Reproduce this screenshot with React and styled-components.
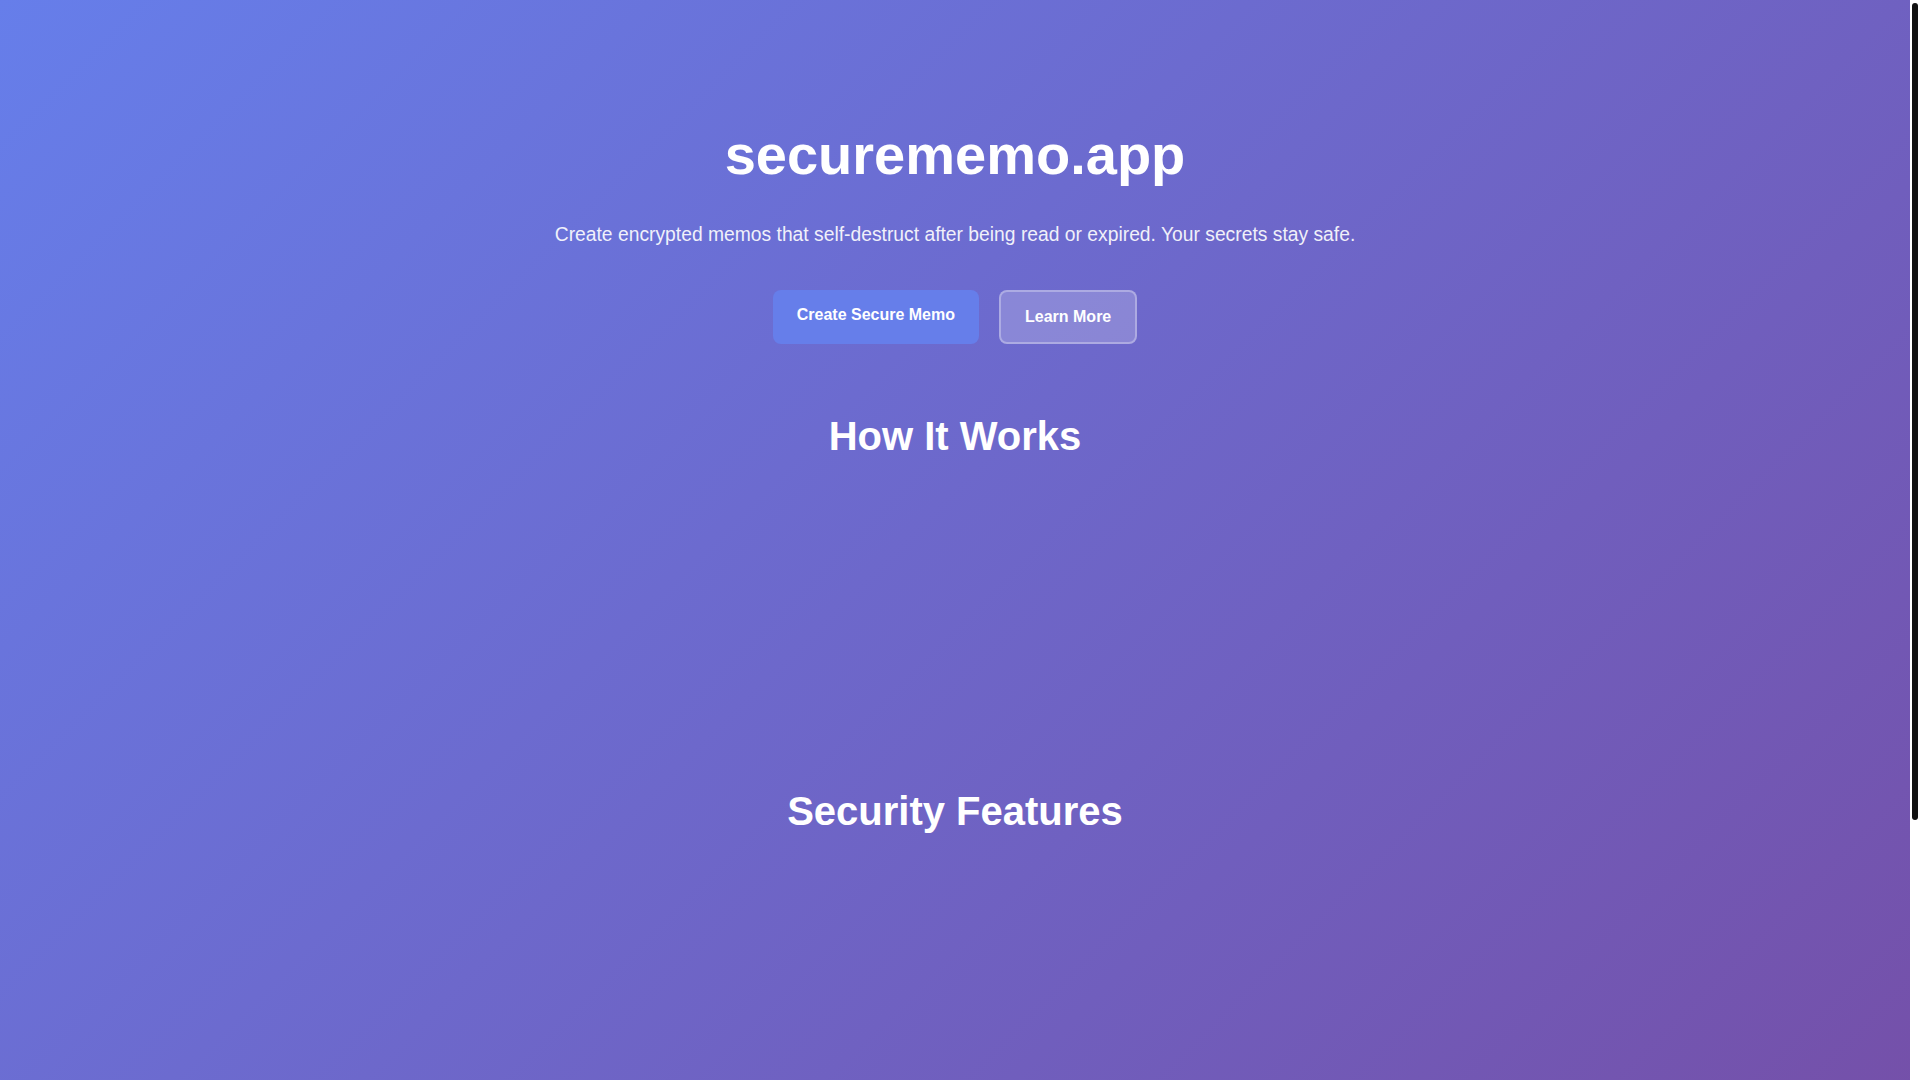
import React from 'react'
import styled, { createGlobalStyle } from 'styled-components'

const GlobalStyle = createGlobalStyle`
html {
    background: #fff;
}
body {
    margin: 0 10px 0 0;
    min-height: 100vh;
    font-family: "Liberation Sans", Arial, sans-serif;
    color: #fff;
    background: linear-gradient(135deg, #667eea 0%, #764ba2 100%);
}
::-webkit-scrollbar {
    width: 10px;
}
::-webkit-scrollbar-track {
    background: #fff;
}
::-webkit-scrollbar-thumb {
    background: #111;
    border: 2px solid #fff;
    border-radius: 5px;
}
`;

const App = () => {
    return (
        <>
            <GlobalStyle />
            <ScrollThumb />
            <Page>
                {/* Hero */}
                <Hero>
                    <Title>securememo.app</Title>
                    <Subtitle>
                        Create encrypted memos that self-destruct after being read or expired. Your secrets stay safe.
                    </Subtitle>
                    <ButtonRow>
                        <Button primary>Create Secure Memo</Button>
                        <Button>Learn More</Button>
                    </ButtonRow>
                </Hero>

                {/* How it works */}
                <Section spacing={69}>
                    <SectionTitle>How It Works</SectionTitle>
                    <CardGrid height={329} />
                </Section>

                {/* Features */}
                <Section spacing={0}>
                    <SectionTitle>Security Features</SectionTitle>
                    <CardGrid height={596} />
                </Section>
            </Page>
        </>
    )
}

export default App

// stands in for the page scrollbar, which headless mode hides
const ScrollThumb = styled.div`
position: fixed;
top: 3px;
right: 2px;
width: 6px;
height: 817px;
background: #111;
border-radius: 3px;
z-index: 10;
`;
const Page = styled.div`
max-width: 1200px;
margin: 0 auto;
padding: 0 20px;
`;
const Hero = styled.header`
display: flex;
flex-direction: column;
align-items: center;
text-align: center;
padding-top: 123px;
`;
const Title = styled.h1`
margin: 0;
font-size: 56px;
font-weight: bold;
line-height: 64px;
`;
const Subtitle = styled.p`
margin: 37px 0 0;
font-size: 19.3px;
line-height: 22px;
opacity: 0.9;
`;
const ButtonRow = styled.div`
display: flex;
justify-content: center;
gap: 20px;
margin-top: 44px;
`;
const Button = styled.button`
font-family: "Liberation Sans", Arial, sans-serif;
font-size: 16px;
font-weight: bold;
line-height: 18px;
color: #fff;
border-radius: 8px;
cursor: pointer;
height: 54px;
box-sizing: border-box;
background: ${p => p.primary ? '#667eea' : 'rgba(255, 255, 255, 0.2)'};
border: ${p => p.primary ? 'none' : '2px solid rgba(255, 255, 255, 0.3)'};
padding: ${p => p.primary ? '16px 24px 20px' : '16px 24px 16px'};
`;
const Section = styled.section`
text-align: center;
margin-top: ${p => p.spacing}px;
`;
const SectionTitle = styled.h2`
margin: 0;
font-size: 40px;
font-weight: bold;
line-height: 46px;
`;
const CardGrid = styled.div`
display: grid;
grid-template-columns: repeat(auto-fit, minmax(280px, 1fr));
gap: 32px;
height: ${p => p.height}px;
`;
